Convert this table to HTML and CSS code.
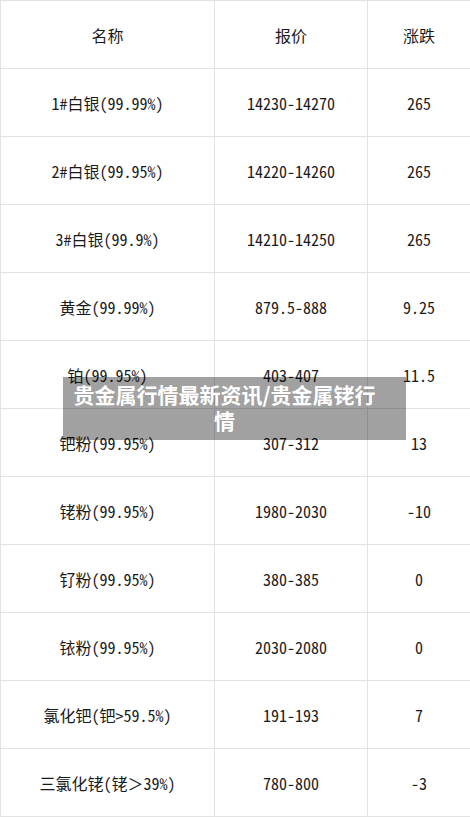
FILE: index.html
```html
<!DOCTYPE html>
<html lang="zh-CN">
<head>
<meta charset="utf-8">
<title>贵金属行情最新资讯</title>
<link rel="stylesheet" href="styles.css">
</head>
<body>
<div class="page">
  <table class="price-table">
    <colgroup>
      <col class="c-name">
      <col class="c-price">
      <col class="c-change">
    </colgroup>
    <tr><td>名称</td><td>报价</td><td>涨跌</td></tr>
    <tr><td>1#白银(99.99%)</td><td>14230-14270</td><td>265</td></tr>
    <tr><td>2#白银(99.95%)</td><td>14220-14260</td><td>265</td></tr>
    <tr><td>3#白银(99.9%)</td><td>14210-14250</td><td>265</td></tr>
    <tr><td>黄金(99.99%)</td><td>879.5-888</td><td>9.25</td></tr>
    <tr><td>铂(99.95%)</td><td>403-407</td><td>11.5</td></tr>
    <tr><td>钯粉(99.95%)</td><td>307-312</td><td>13</td></tr>
    <tr><td>铑粉(99.95%)</td><td>1980-2030</td><td>-10</td></tr>
    <tr><td>钌粉(99.95%)</td><td>380-385</td><td>0</td></tr>
    <tr><td>铱粉(99.95%)</td><td>2030-2080</td><td>0</td></tr>
    <tr><td>氯化钯(钯&gt;59.5%)</td><td>191-193</td><td>7</td></tr>
    <tr><td>三氯化铑(铑＞39%)</td><td>780-800</td><td>-3</td></tr>
  </table>
  <div class="caption">贵金属行情最新资讯/贵金属铑行<br>情</div>
</div>
</body>
</html>
```
FILE: styles.css
```css
html, body {
  margin: 0;
  padding: 0;
  background: #ffffff;
}
.page {
  position: relative;
  width: 470px;
  height: 817px;
  overflow: hidden;
}
.price-table {
  border-collapse: collapse;
  table-layout: fixed;
  width: 470px;
  font-family: "Noto Sans Mono CJK SC", "Noto Sans CJK SC", "Liberation Mono", monospace;
  font-size: 16px;
  color: #1a1a1a;
}
.c-name { width: 214px; }
.c-price { width: 153px; }
.c-change { width: 103px; }
.price-table td {
  border: 1px solid #e3e3e3;
  height: 67px;
  padding: 0;
  text-align: center;
  vertical-align: middle;
  white-space: nowrap;
}
.caption {
  position: absolute;
  left: 63px;
  top: 377px;
  width: 323px;
  height: 52px;
  padding: 4px 20px 7px 0;
  background: rgba(0, 0, 0, 0.37);
  color: #ffffff;
  font-family: "Noto Sans CJK SC", sans-serif;
  font-weight: 700;
  font-size: 21px;
  line-height: 26px;
  text-align: center;
  white-space: nowrap;
}
```
